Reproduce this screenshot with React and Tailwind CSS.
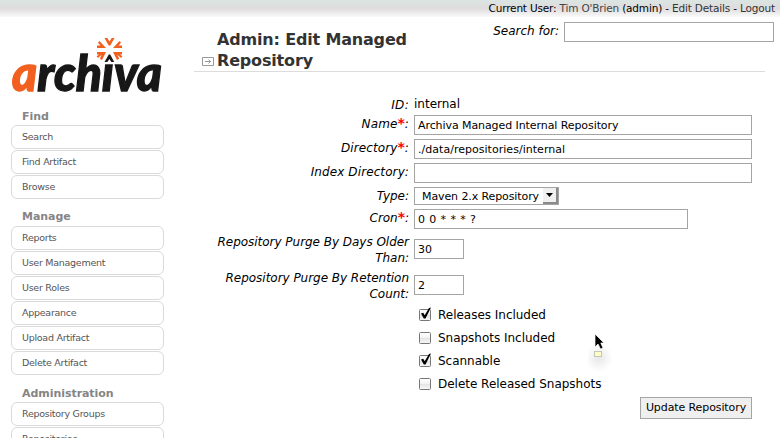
const menus = [
  { title: 'Find', head: 'h-[23px] pt-[7px]', items: ['Search', 'Find Artifact', 'Browse'] },
  {
    title: 'Manage',
    head: 'h-[26px] pt-[9px]',
    items: ['Reports', 'User Management', 'User Roles', 'Appearance', 'Upload Artifact', 'Delete Artifact'],
  },
  { title: 'Administration', head: 'h-[26px] pt-[10px]', items: ['Repository Groups', 'Repositories'] },
];

function Logo() {
  return (
    <svg width="156" height="66" viewBox="11 34 156 66" className="block overflow-visible" role="img" aria-label="archiva">
      <text
        x="12"
        y="90.500"
        textLength="150"
        lengthAdjust="spacingAndGlyphs"
        fontSize="49"
        fontWeight="900"
        fontStyle="italic"
        fontFamily="Lato, sans-serif"
        fill="#171717"
        stroke="#171717"
        strokeWidth="1.3"
      >
        <tspan fill="#f2601f" stroke="#f2601f">
          a
        </tspan>
        rchiva
      </text>
      <rect x="97" y="36" width="34" height="27.500" fill="#fff" />
      <g fill="#f2601f">
        <path d="M99.500 41l6.500 7H97v-2.500h3.500l-2.600-2.700z" />
        <path d="M104.500 38h2.800l2.200 3.500 2.200-3.500h2.800l-4.200 7.500h-1.600z" />
        <path d="M119.500 41l-6.500 7h9v-2.500h-3.500l2.600-2.700z" />
        <path d="M97 52h9l-4 8-2.200-1.200 1.800-4-3.600 3.200-1.400-1.700 2.500-1.800H97z" />
        <path d="M122 52h-9l4 8 2.200-1.200-1.800-4 3.600 3.200 1.400-1.700-2.500-1.800h2.100z" />
      </g>
      <path d="M108.800 54.500h1.400l4 7.500h-2.900l-1.800-3-2.200 3h-2.800z" fill="#171717" />
    </svg>
  );
}

function Label({ children, required, className = '' }) {
  return (
    <label className={`mt-px mr-[5px] w-[210px] shrink-0 text-right text-[12px] leading-4 tracking-[-0.03px] italic ${className}`}>
      {children}
      {required && <b className="text-[14px] leading-none text-[#f00] not-italic">*</b>}:
    </label>
  );
}

function Field({ value, className }) {
  return (
    <div className={`h-[20px] shrink-0 border border-[#a5a5a5] pl-[3px] text-[11px] leading-[19px] whitespace-pre ${className}`}>
      {value}
    </div>
  );
}

function Check({ checked, children, className = '' }) {
  return (
    <div className={`flex h-[23px] items-center ${className}`}>
      <svg width="16" height="18" viewBox="0 0 16 18" className="mr-[4px]">
        <defs>
          <linearGradient id="box" x1="0" y1="0" x2="0" y2="1">
            <stop offset="0" stopColor="#fff" />
            <stop offset=".45" stopColor="#f4f4f4" />
            <stop offset=".5" stopColor="#e2e2e2" />
            <stop offset="1" stopColor="#fafafa" />
          </linearGradient>
        </defs>
        <rect x="1.500" y="3.500" width="11" height="11" rx="1" fill="url(#box)" stroke="#777" />
        {checked && <path d="M3 7.500l2.200-.8 1.500 2.600L11 2l2-.5L7.500 12.500H5.800z" fill="#000" />}
      </svg>
      <span className="text-[12px] leading-4 tracking-[-0.02px]">{children}</span>
    </div>
  );
}

export default function App() {
  return (
    <div className="relative h-[438px] w-[780px] overflow-hidden bg-white font-['DejaVu_Sans',Verdana,sans-serif] whitespace-nowrap text-black">
      <header className="h-[17px] bg-linear-to-b from-[#dae5e2] via-[#dfdcdd] to-[#fafafa] pr-[5px] text-right text-[10.500px] leading-[17px] tracking-[-0.17px] text-black">
        Current User: <span className="text-[#444]">Tim O'Brien</span> (admin) -{' '}
        <span className="text-[#333]">Edit Details</span> - <span className="text-[#333]">Logout</span>
      </header>
      <div className="flex">
        <aside className="w-[194px] shrink-0 pt-[17px] pl-[11px]">
          <Logo />
          <nav className="pt-[2px]">
            {menus.map((m) => (
              <section key={m.title}>
                <h2 className={`pl-[11px] text-[11px] leading-4 font-bold tracking-[-0.05px] text-[#858585] ${m.head}`}>{m.title}</h2>
                <ul>
                  {m.items.map((i) => (
                    <li
                      key={i}
                      className="mb-px h-[24px] w-[153px] rounded-[6px] border border-[#dadada] pl-[10px] text-[9.500px] leading-[22px] tracking-[-0.27px] text-[#555]"
                    >
                      {i}
                    </li>
                  ))}
                </ul>
              </section>
            ))}
          </nav>
        </aside>
        <main className="w-[586px]">
          <div className="flex h-[55px]">
            <div className="flex h-[55px] w-[571px] border-b border-[#dcdcdc] pt-[12px] pl-[8px]">
              <svg width="12" height="9" viewBox="0 0 12 9" className="mt-[28px] mr-[3px] shrink-0" fill="none" stroke="#999">
                <path d="M.5.5h11v8H.5zM3 4.500h6M6.500 2.500l2 2-2 2" />
              </svg>
              <h1 className="w-[200px] shrink-0 text-[16px] leading-[21px] font-bold tracking-[-0.17px] text-[#333]">
                Admin: Edit Managed
                <br />
                Repository
              </h1>
              <div className="flex shrink-0 pl-[74px]">
                <div className="-mt-[7px] flex h-[20px]">
                  <span className="mt-px mr-[5px] w-[68px] text-right text-[12px] leading-4 italic">Search for:</span>
                  <div className="h-[20px] w-[210px] border border-[#a5a5a5]" />
                </div>
              </div>
            </div>
          </div>
          <form className="flex w-[558px] flex-col pt-[24px] pl-[5px]">
            <div className="flex h-[19px] text-[12px] leading-4">
              <Label className="tracking-[0.3px]!">ID</Label>
              internal
            </div>
            <div className="flex h-[24px]">
              <Label required className="tracking-[0.1px]!">
                Name
              </Label>
              <Field value="Archiva Managed Internal Repository" className="w-[338px] tracking-[-0.08px]" />
            </div>
            <div className="flex h-[24px]">
              <Label required className="tracking-[0.1px]!">
                Directory
              </Label>
              <Field value="./data/repositories/internal" className="w-[338px] tracking-[0.03px]" />
            </div>
            <div className="flex h-[24px]">
              <Label className="tracking-[0.1px]!">Index Directory</Label>
              <Field value="" className="w-[338px]" />
            </div>
            <div className="flex h-[22px]">
              <Label>Type</Label>
              <div className="flex h-[18px] w-[145px] justify-between border border-[#a5a5a5] pl-[7px] text-[11px] leading-[17px] tracking-[-0.1px]">
                Maven 2.x Repository
                <span className="flex h-4 w-[15px] items-center justify-center border-r-2 border-b-2 border-[#8a8a8a] bg-[#f0f0f0]">
                  <svg width="7" height="4" viewBox="0 0 7 4">
                    <path d="M0 0h7L3.500 4z" />
                  </svg>
                </span>
              </div>
            </div>
            <div className="flex h-[24px]">
              <Label required>Cron</Label>
              <Field value="0 0 * * * ?" className="w-[274px] tracking-[0.4px]" />
            </div>
            <div className="flex h-[36px] pt-px">
              <Label className="mt-0!">
                Repository Purge By Days Older
                <br />
                Than
              </Label>
              <Field value="30" className="mt-[5px] w-[50px]" />
            </div>
            <div className="flex h-[36px] pt-px">
              <Label className="mt-0!">
                Repository Purge By Retention
                <br />
                Count
              </Label>
              <Field value="2" className="mt-[5px] w-[50px]" />
            </div>
            <div className="-mt-[2px] pl-[219px]">
              <Check checked>Releases Included</Check>
              <Check>Snapshots Included</Check>
              <Check checked>Scannable</Check>
              <Check>Delete Released Snapshots</Check>
            </div>
            <button type="button" className="mt-[2px] h-[22px] w-[112px] self-end border border-[#a5a5a5] bg-[#efefef] text-[11px] tracking-[-0.1px]">
              Update Repository
            </button>
          </form>
        </main>
      </div>
      <div className="absolute top-[328px] left-[588px]">
        <svg width="34" height="50" viewBox="0 0 34 50">
          <defs>
            <radialGradient id="shade">
              <stop offset="0" stopColor="#000" stopOpacity=".09" />
              <stop offset="1" stopColor="#000" stopOpacity="0" />
            </radialGradient>
          </defs>
          <circle cx="11" cy="30" r="14" fill="url(#shade)" />
          <rect x="6.500" y="23.500" width="7" height="5" fill="#ffffc5" stroke="#c6c6b8" />
          <path d="M7 6v13l3-3 2.500 5 2.500-1-2.200-5H16z" fill="#000" stroke="#fff" strokeWidth=".7" />
        </svg>
      </div>
    </div>
  );
}
